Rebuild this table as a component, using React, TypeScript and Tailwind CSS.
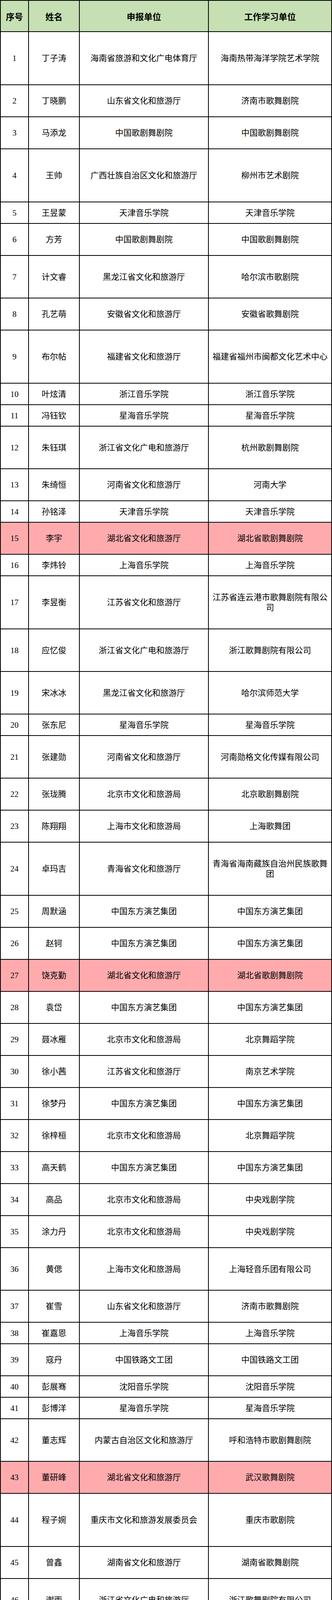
type Row = {
  no: number
  name: string
  unit: string
  work: string
  size: 2 | 3 | 4 | 5
  mark?: boolean
}

const rows: Row[] = [
  { no: 1, name: '丁子涛', unit: '海南省旅游和文化广电体育厅', work: '海南热带海洋学院艺术学院', size: 5 },
  { no: 2, name: '丁晓鹏', unit: '山东省文化和旅游厅', work: '济南市歌舞剧院', size: 3 },
  { no: 3, name: '马添龙', unit: '中国歌剧舞剧院', work: '中国歌剧舞剧院', size: 3 },
  { no: 4, name: '王帅', unit: '广西壮族自治区文化和旅游厅', work: '柳州市艺术剧院', size: 5 },
  { no: 5, name: '王昱蒙', unit: '天津音乐学院', work: '天津音乐学院', size: 2 },
  { no: 6, name: '方芳', unit: '中国歌剧舞剧院', work: '中国歌剧舞剧院', size: 3 },
  { no: 7, name: '计文睿', unit: '黑龙江省文化和旅游厅', work: '哈尔滨市歌剧院', size: 4 },
  { no: 8, name: '孔艺萌', unit: '安徽省文化和旅游厅', work: '安徽省歌舞剧院', size: 3 },
  { no: 9, name: '布尔帖', unit: '福建省文化和旅游厅', work: '福建省福州市闽都文化艺术中心', size: 5 },
  { no: 10, name: '叶炫清', unit: '浙江音乐学院', work: '浙江音乐学院', size: 2 },
  { no: 11, name: '冯钰钦', unit: '星海音乐学院', work: '星海音乐学院', size: 2 },
  { no: 12, name: '朱钰琪', unit: '浙江省文化广电和旅游厅', work: '杭州歌剧舞剧院', size: 4 },
  { no: 13, name: '朱绮恒', unit: '河南省文化和旅游厅', work: '河南大学', size: 3 },
  { no: 14, name: '孙铭泽', unit: '天津音乐学院', work: '天津音乐学院', size: 2 },
  { no: 15, name: '李宇', unit: '湖北省文化和旅游厅', work: '湖北省歌剧舞剧院', size: 3, mark: true },
  { no: 16, name: '李炜铃', unit: '上海音乐学院', work: '上海音乐学院', size: 2 },
  { no: 17, name: '李昱衡', unit: '江苏省文化和旅游厅', work: '江苏省连云港市歌舞剧院有限公司', size: 5 },
  { no: 18, name: '应忆俊', unit: '浙江省文化广电和旅游厅', work: '浙江歌舞剧院有限公司', size: 4 },
  { no: 19, name: '宋冰冰', unit: '黑龙江省文化和旅游厅', work: '哈尔滨师范大学', size: 4 },
  { no: 20, name: '张东尼', unit: '星海音乐学院', work: '星海音乐学院', size: 2 },
  { no: 21, name: '张建勋', unit: '河南省文化和旅游厅', work: '河南勋格文化传媒有限公司', size: 4 },
  { no: 22, name: '张珑腾', unit: '北京市文化和旅游局', work: '北京歌剧舞剧院', size: 3 },
  { no: 23, name: '陈翔翔', unit: '上海市文化和旅游局', work: '上海歌舞团', size: 3 },
  { no: 24, name: '卓玛吉', unit: '青海省文化和旅游厅', work: '青海省海南藏族自治州民族歌舞团', size: 5 },
  { no: 25, name: '周默涵', unit: '中国东方演艺集团', work: '中国东方演艺集团', size: 3 },
  { no: 26, name: '赵钶', unit: '中国东方演艺集团', work: '中国东方演艺集团', size: 3 },
  { no: 27, name: '饶克勤', unit: '湖北省文化和旅游厅', work: '湖北省歌剧舞剧院', size: 3, mark: true },
  { no: 28, name: '袁岱', unit: '中国东方演艺集团', work: '中国东方演艺集团', size: 3 },
  { no: 29, name: '聂冰雁', unit: '北京市文化和旅游局', work: '北京舞蹈学院', size: 3 },
  { no: 30, name: '徐小茜', unit: '江苏省文化和旅游厅', work: '南京艺术学院', size: 3 },
  { no: 31, name: '徐梦丹', unit: '中国东方演艺集团', work: '中国东方演艺集团', size: 3 },
  { no: 32, name: '徐梓桓', unit: '北京市文化和旅游局', work: '北京舞蹈学院', size: 3 },
  { no: 33, name: '高天鹤', unit: '中国东方演艺集团', work: '中国东方演艺集团', size: 3 },
  { no: 34, name: '高品', unit: '北京市文化和旅游局', work: '中央戏剧学院', size: 3 },
  { no: 35, name: '涂力丹', unit: '北京市文化和旅游局', work: '中央戏剧学院', size: 3 },
  { no: 36, name: '黄偲', unit: '上海市文化和旅游局', work: '上海轻音乐团有限公司', size: 4 },
  { no: 37, name: '崔雪', unit: '山东省文化和旅游厅', work: '济南市歌舞剧院', size: 3 },
  { no: 38, name: '崔嘉恩', unit: '上海音乐学院', work: '上海音乐学院', size: 2 },
  { no: 39, name: '寇丹', unit: '中国铁路文工团', work: '中国铁路文工团', size: 3 },
  { no: 40, name: '彭展骞', unit: '沈阳音乐学院', work: '沈阳音乐学院', size: 2 },
  { no: 41, name: '彭博洋', unit: '星海音乐学院', work: '星海音乐学院', size: 2 },
  { no: 42, name: '董志辉', unit: '内蒙古自治区文化和旅游厅', work: '呼和浩特市歌剧舞剧院', size: 4 },
  { no: 43, name: '董研峰', unit: '湖北省文化和旅游厅', work: '武汉歌舞剧院', size: 3, mark: true },
  { no: 44, name: '程子婉', unit: '重庆市文化和旅游发展委员会', work: '重庆市歌剧院', size: 5 },
  { no: 45, name: '曾鑫', unit: '湖南省文化和旅游厅', work: '湖南省歌舞剧院', size: 3 },
  { no: 46, name: '谢雨', unit: '浙江省文化广电和旅游厅', work: '浙江歌舞剧院有限公司', size: 4 },
  { no: 47, name: '谢潘婕', unit: '安徽省文化和旅游厅', work: '安徽艺术学院', size: 3 },
  { no: 48, name: '赖仙宇', unit: '湖南省文化和旅游厅', work: '湖南师范大学音乐学院', size: 4 },
  { no: 49, name: '鞠红川', unit: '中国东方演艺集团', work: '中国东方演艺集团', size: 3 },
  { no: 50, name: '魏然', unit: '海南省旅游和文化广电体育厅', work: '海口经济学院', size: 5 },
]

// row height by number of spreadsheet line units
const heights = {
  2: 'h-[55px]',
  3: 'h-[82px]',
  4: 'h-[109px]',
  5: 'h-[136px]',
}

const cell =
  'flex items-center justify-center text-center border-r-2 border-b-2 border-black px-1 leading-[26px] overflow-hidden'

export default function App() {
  return (
    <div className="w-[849px] overflow-hidden bg-white text-black font-['Liberation_Serif','Noto_Sans_CJK_SC',serif] text-[21px]">
      <div className="border-l-2 border-t-2 border-black">
        {/* header */}
        <div className="grid grid-cols-[72px_130px_330px_315px] h-[80px] bg-[#c6e0b4] font-bold text-[22px] font-['Noto_Sans_CJK_SC',sans-serif]">
          <div className={cell}>序号</div>
          <div className={cell}>姓名</div>
          <div className={cell}>申报单位</div>
          <div className={cell}>工作学习单位</div>
        </div>

        {rows.map((r) => (
          <div
            key={r.no}
            className={`grid grid-cols-[72px_130px_330px_315px] ${heights[r.size]} ${
              r.mark ? 'bg-[#ffabae]' : 'bg-white'
            }`}
          >
            <div className={cell}>{r.no}</div>
            <div className={cell}>{r.name}</div>
            <div className={cell}>{r.unit}</div>
            <div className={cell}>{r.work}</div>
          </div>
        ))}
      </div>
    </div>
  )
}
